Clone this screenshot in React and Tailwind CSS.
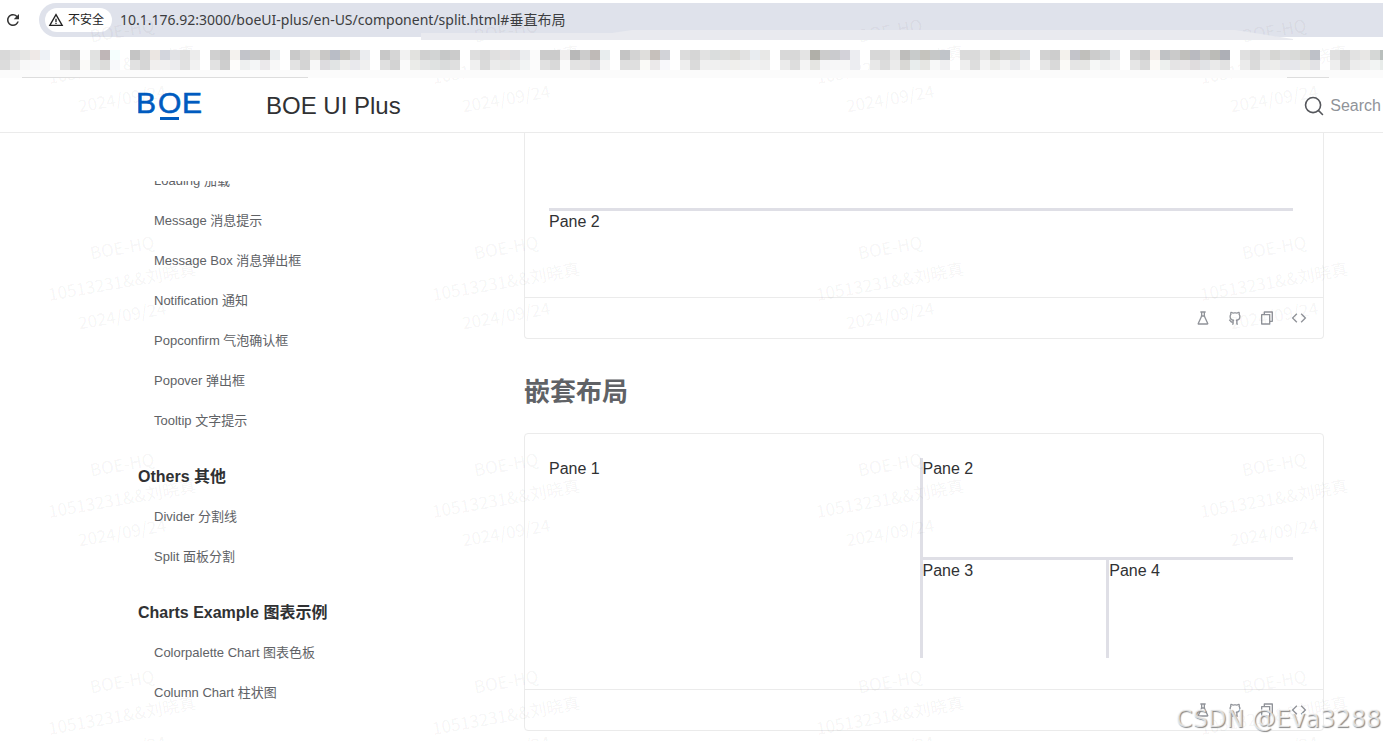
import React, { useState } from "react";
import { RiFlaskLine, RiGithubLine, RiFileCopyLine, RiCodeLine } from "react-icons/ri";
import { MdRefresh, MdWarningAmber } from "react-icons/md";

const menu = [
  {
    title: "",
    items: [
      "Loading 加载",
      "Message 消息提示",
      "Message Box 消息弹出框",
      "Notification 通知",
      "Popconfirm 气泡确认框",
      "Popover 弹出框",
      "Tooltip 文字提示",
    ],
  },
  { title: "Others 其他", items: ["Divider 分割线", "Split 面板分割"] },
  {
    title: "Charts Example 图表示例",
    items: ["Colorpalette Chart 图表色板", "Column Chart 柱状图"],
  },
];

// Pixelated bookmarks: start x, upper row, lower row
const blocks = [
  [0, "d9d9d9 e0e0e0 e6e6e4 efe9e7 eef2f6", "dcdcdc ebebeb f8f8f8 f9f9fa fafafa"],
  [60, "d0d0d0 cbcbcb fdfdfd e1e2e1 bfb6b7 f5fffe", "e0e0e0 d0d0d0 fbfaf8 e3e5e4 dcdcda f8f9fb"],
  [130, "c4c4c4 d5d5d5 ebe6e2 d3d6dd e1e2e5 dedede ececec", "e1e1e1 d6d6d6 f1efee f1f0f0 ececee e1e1e1 f2f2f2"],
  [210, "d0d0d0 cacaca f4f2ee c2c4ca c6c7c8 c6c5c4 ebeef0", "e2e2e2 cecece fefdfb eef0f0 f4f6f7 ebe9eb f8f8f8"],
  [290, "c9c9c9 d5d5d5 e3e2df c9c8c6 b9bdc6 c9c8c4 d6d6d6 ebedf0", "e3e3e3 d4d4d4 f8f8f8 dddcdf e1e4e4 eeeeed e9e9ed f0f0f0"],
  [380, "c8c8c8 d6d6d6 f2f2f2 e2e2df d0d0d0 d2d4d4 c6c8c8 cbcbcb", "e0e0e0 d3d3d3 fafafa ebece9 e4e5e5 dfe2e1 dadcdc dfdfdf"],
  [470, "dedede d8d8d8 e0e0e0 e5e1e1 e0e0e2 ebedef fbfbfb", "f0f0f0 dadada ebebeb e7e8e7 ebebeb f2f4f4 fcfcfc"],
  [540, "cbcbcb cbcbcb f0eeee b8b8b8 cccccc bfbab7 e8edee", "e1e1e1 d9d9d9 fafafa e3e3e3 e4e3e2 dbdbde f5f5f5"],
  [620, "c4c4c4 d3d3d3 dfdedc c6c0bb d2d3d8", "dfdfdf dfdfdf fafaf7 ebe9ea f8f8fb"],
  [680, "dcdcdc d6d6d6 e2e2e2 dadddd dedfde dcdbd8 e2e2e2 e8ecf0 e8e8e7", "eeeeee dadada f0f0f0 f0f0f0 eeeeee f0efec f0f0f0 f2f2f2 efefef"],
  [780, "d8d8d8 d8d8d8 e4e4e4 b0afa8 cccccc cacbce d3d2d9 ecedf1", "ebebeb dddddd f4f4f4 e5e5e2 f5f5f7 f7f7f8 f7f7f7 ecedf1"],
  [870, "d7d7d7 d7d7d7 e6e6e6 bebdbb c8cbcb c5c3bd c6c8c8 c0c4c9", "e8e8e8 dcdcdc ebebeb d9d8d5 e8eded e6e6e3 f7f8f8 efeff1"],
  [960, "dadada dadada e6e6e6 cdcdc9 d5d5d5 d6d6d2 d8dbe0", "eeeeee dddddd f3f3f3 ebebe9 f2f2f2 e8e9ec f4f4f4"],
  [1040, "d2d2d2 cdcdcd f3f1ec c3c4ca c0bfbb cccccc cfd1d2 e5e7ea", "e6e6e6 d9d9d9 fbfaf7 e5e5e5 e6e6e4 f6f8f7 f0f1f1 f3f3f3"],
  [1130, "d0d0d0 cacaca f4eeea c0c2c5 cacaca c0bfbb b9bac0 c6c6c5 bbbbb7 adafb6", "e6e6e6 d9d9d9 fcfaf7 edf0ee e5e4e5 e8e6e7 dfdcdd e1e3e6 eaeaea e2e2e2"],
  [1240, "e0e0e0 d8d8d8 e2e2e2 d6d6d3 dcdcdc d9dad8 d4d4d0 bec1c8", "ebebeb dadada ebebeb ededeb e7e7ea e6e7eb ebebe8 e2e2e5"],
  [1330, "e0e0e0 d6d6d6 e2e2e2 e8e7e5 d5d7d6 b9bfbd", "eeeeee dadada ececec eeeeee f2f4f3 e8ecea"],
];

function BookmarkStrip() {
  return (
    <div className="relative h-[41px]">
      <svg
        className="absolute bottom-0 left-0"
        width="1390"
        height="48"
        viewBox="0 30 1390 48"
        aria-hidden="true"
      >
        <path d="M421 33H612L632 30H1235L1293 39V40H421Z" fill="#e9eaef" />
        <rect x="0" y="70" width="1390" height="8" fill="#fbfbfb" />
        {blocks.map(([start, upper, lower]) =>
          [upper, lower].map((row, r) =>
            row
              .split(" ")
              .map((color, i) => (
                <rect
                  key={`${start}-${r}-${i}`}
                  x={start + i * 10}
                  y={50 + r * 10}
                  width="10"
                  height="10"
                  fill={`#${color}`}
                  shapeRendering="crispEdges"
                />
              ))
          )
        )}
        <path d="M22 77.5H308M1287 77.5H1329" stroke="#dddddd" />
      </svg>
    </div>
  );
}

function BrowserBar() {
  const [url, setUrl] = useState(
    "10.1.176.92:3000/boeUI-plus/en-US/component/split.html#垂直布局"
  );

  return (
    <div className="flex items-center pt-[3px]">
      <button aria-label="Reload" className="w-[39px] pl-1 text-[#333]">
        <MdRefresh size={18} />
      </button>
      <div className="flex flex-1 items-center gap-2 h-[34px] pl-1.5 rounded-l-full bg-[#dfe2eb]">
        <button className="flex items-center gap-1 h-6 pl-[3px] pr-2 rounded-full bg-white text-xs text-[#222] whitespace-nowrap">
          <MdWarningAmber size={16} />
          不安全
        </button>
        <input
          aria-label="Address"
          value={url}
          onChange={(e) => setUrl(e.target.value)}
          className="flex-1 min-w-0 bg-transparent outline-none font-['Noto_Sans','Noto_Sans_CJK_SC',sans-serif] text-sm text-[#3c3d40]"
        />
      </div>
    </div>
  );
}

function Logo() {
  return (
    <svg width="64" height="30" viewBox="0 0 64 30" aria-label="BOE">
      <g
        fill="#005bbf"
        stroke="#005bbf"
        strokeWidth="0.6"
        fontFamily="Liberation Sans, sans-serif"
        fontSize="30"
      >
        <text x="-2" y="22">B</text>
        <text x="20" y="22">O</text>
        <text x="44" y="22">E</text>
      </g>
      <rect x="22" y="26" width="19" height="3" fill="#005bbf" />
    </svg>
  );
}

function Header() {
  return (
    <header className="flex items-center h-[55px] pt-0.5 pl-[138px] pr-0.5 border-b border-[#ebebeb]">
      <a href="#home" className="w-32">
        <Logo />
      </a>
      <span className="text-2xl text-[#303133]">BOE UI Plus</span>
      <button className="ml-auto flex items-center gap-1.5 text-[#909399]">
        <svg className="text-[#55575c]" width="20" height="20" viewBox="0 0 20 20">
          <path
            d="M14.386 14.386l4.0877 4.0877-4.0877-4.0877c-2.9418 2.9419-7.7115 2.9419-10.6533 0-2.9419-2.9418-2.9419-7.7115 0-10.6533 2.9418-2.9419 7.7115-2.9419 10.6533 0 2.9419 2.9418 2.9419 7.7115 0 10.6533z"
            stroke="currentColor"
            strokeWidth="1.6"
            fill="none"
            strokeLinecap="round"
            strokeLinejoin="round"
          />
        </svg>
        Search
      </button>
    </header>
  );
}

function Sidebar() {
  return (
    <aside className="w-[386px] shrink-0 pt-12 overflow-hidden">
      <nav className="h-full overflow-hidden">
        <div className="-mt-5">
          {menu.map((group) => (
            <section key={group.title} className="mb-4">
              {group.title && (
                <h3 className="flex items-center h-10 font-bold text-[#303133]">{group.title}</h3>
              )}
              {group.items.map((item) => (
                <a
                  key={item}
                  href="#item"
                  className="flex items-center h-10 pl-4 text-[13px] text-[#606266]"
                >
                  {item}
                </a>
              ))}
            </section>
          ))}
        </div>
      </nav>
    </aside>
  );
}

function DemoFooter() {
  return (
    <div className="flex items-center justify-end gap-4 h-[41px] px-4 border-t border-[#ebebeb] text-[#909399]">
      <button aria-label="Edit in playground">
        <RiFlaskLine size={16} />
      </button>
      <button aria-label="View on GitHub">
        <RiGithubLine size={16} />
      </button>
      <button aria-label="Copy code">
        <RiFileCopyLine size={16} />
      </button>
      <button aria-label="View source">
        <RiCodeLine size={16} />
      </button>
    </div>
  );
}

function Content() {
  return (
    <main className="flex-1 min-w-0 pr-[59px] text-[#303133] leading-[22px]">
      <div className="border border-t-0 border-[#ebebeb] rounded-b">
        <div className="pl-6 pr-[30px] pb-[31px]">
          <div className="h-[75px]" />
          <div className="h-[3px] bg-[#dfdfe6]" />
          <div className="h-[55px]">Pane 2</div>
        </div>
        <DemoFooter />
      </div>

      <h2 className="mt-9 mb-6 text-[26px] leading-[34px] font-bold text-[#606266]">嵌套布局</h2>

      <div className="border border-[#ebebeb] rounded">
        <div className="pl-6 pr-[30px] pt-6 pb-[31px]">
          <div className="flex h-[200px]">
            <div className="flex-1">Pane 1</div>
            <div className="w-[3px] bg-[#dfdfe6]" />
            <div className="flex flex-1 flex-col">
              <div className="flex-1">Pane 2</div>
              <div className="h-[3px] bg-[#dfdfe6]" />
              <div className="flex flex-1">
                <div className="flex-1">Pane 3</div>
                <div className="w-[3px] bg-[#dfdfe6]" />
                <div className="flex-1">Pane 4</div>
              </div>
            </div>
          </div>
        </div>
        <DemoFooter />
      </div>
    </main>
  );
}

function Watermark() {
  return (
    <div className="absolute inset-0 overflow-hidden pointer-events-none select-none" aria-hidden="true">
      <div className="grid grid-cols-[repeat(4,384px)] font-['Noto_Sans_CJK_SC',sans-serif] text-[17px] leading-[34px] text-black/5">
        {Array.from({ length: 16 }, (_, i) => (
          <div key={i} className="w-[244px] h-[217px] pt-[13px] text-center whitespace-nowrap">
            <p className="-rotate-10">BOE-HQ</p>
            <p className="-rotate-10">10513231&amp;&amp;刘晓真</p>
            <p className="-rotate-10">2024/09/24</p>
          </div>
        ))}
      </div>
    </div>
  );
}

export default function App() {
  return (
    <div className="relative flex flex-col h-screen overflow-hidden bg-white font-['Liberation_Sans','Noto_Sans_CJK_SC',sans-serif]">
      <Watermark />
      <BrowserBar />
      <BookmarkStrip />
      <Header />
      <div className="flex flex-1 min-h-0 pl-[138px]">
        <Sidebar />
        <Content />
      </div>
      <span className="absolute right-0.5 bottom-1 font-['DejaVu_Sans',sans-serif] text-2xl leading-9 text-white/70 text-shadow-[1px_1px_1px_#888]">
        CSDN @Eva3288
      </span>
    </div>
  );
}
